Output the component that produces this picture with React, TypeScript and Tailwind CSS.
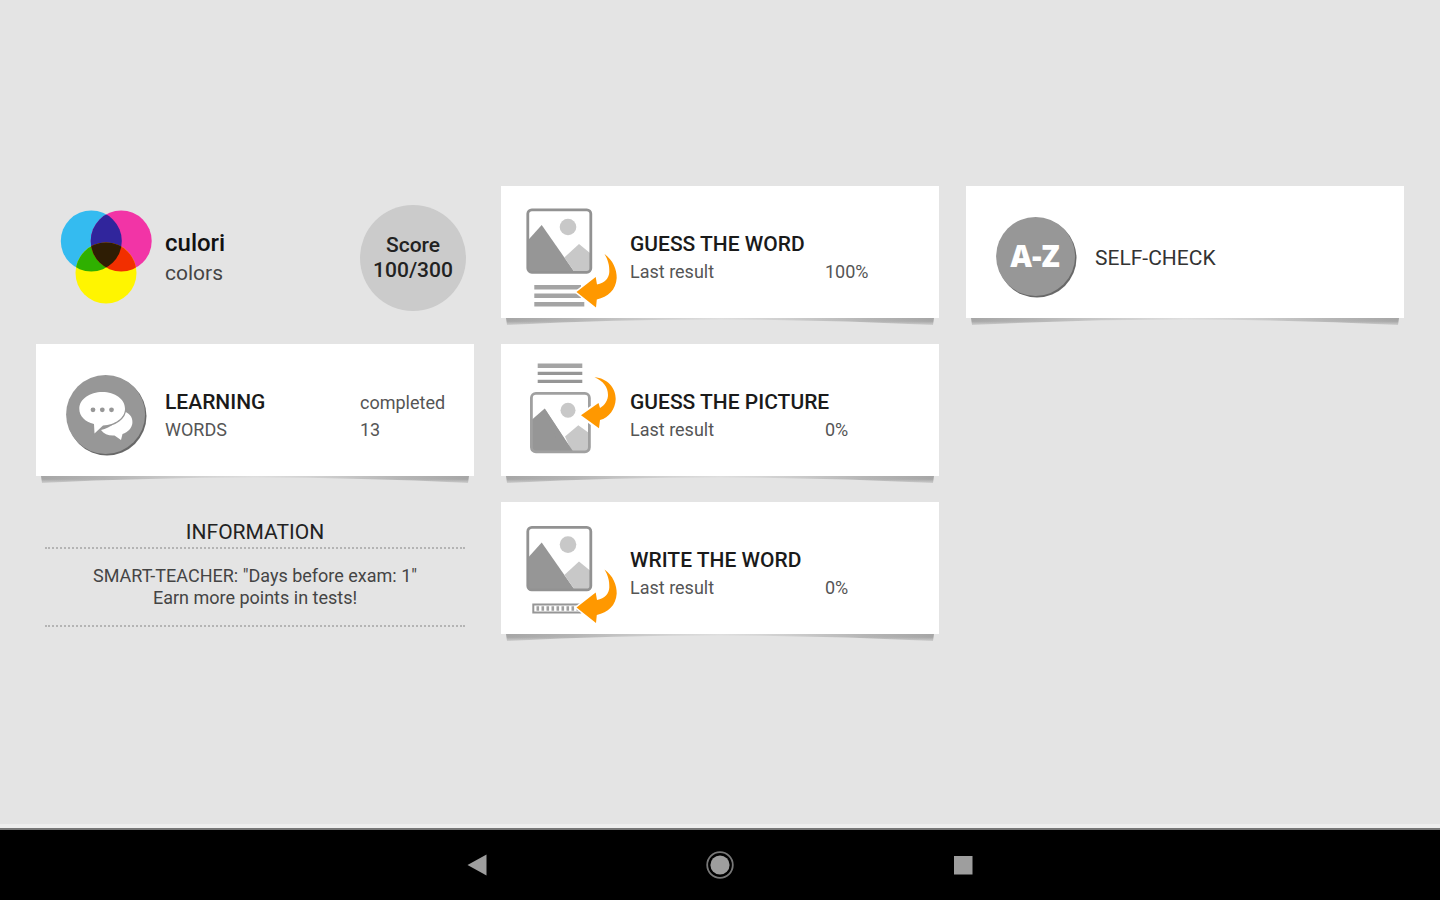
import type { ReactNode } from "react";

interface CardProps {
  icon: ReactNode;
  title: string;
  subtitle?: string;
  label?: string;
  value?: string;
}

function CardShadow() {
  return (
    <svg
      className="absolute left-1 right-1 top-full h-2 w-[calc(100%-8px)]"
      viewBox="0 0 430 8"
      preserveAspectRatio="none"
      aria-hidden="true"
    >
      <defs>
        <linearGradient id="shade" x1="0" x2="1" y1="0" y2="0">
          <stop offset="0" stopColor="#a6a6a6" />
          <stop offset="0.15" stopColor="#b4b4b4" />
          <stop offset="0.35" stopColor="#cfcfcf" />
          <stop offset="0.5" stopColor="#dedede" />
          <stop offset="0.65" stopColor="#cfcfcf" />
          <stop offset="0.85" stopColor="#b4b4b4" />
          <stop offset="1" stopColor="#a6a6a6" />
        </linearGradient>
        <linearGradient id="fade" x1="0" x2="0" y1="0" y2="1">
          <stop offset="0.4" stopColor="#e4e4e4" stopOpacity="0" />
          <stop offset="1" stopColor="#e4e4e4" stopOpacity="0.8" />
        </linearGradient>
      </defs>
      <path d="M1 0H429L428 7Q215 -4 2 7Z" fill="url(#shade)" />
      <path d="M0 0H430V8H0Z" fill="url(#fade)" />
    </svg>
  );
}

function Icon({ children }: { children: ReactNode }) {
  return (
    <svg className="h-[108px] w-[100px] shrink-0" viewBox="0 0 100 108" aria-hidden="true">
      {children}
    </svg>
  );
}

function Disc() {
  return (
    <>
      <circle cx="51" cy="54" r="39.5" fill="#686868" />
      <circle cx="49.6" cy="52.4" r="39.5" fill="#979797" />
    </>
  );
}

function Picture() {
  return (
    <>
      <path d="M7.2 36L20.7 21L53.5 68H7.2Z" fill="#969696" />
      <path d="M43.3 53.5L58 40L69 49V68H53.5Z" fill="#c8c8c8" />
      <circle cx="47" cy="23" r="8.3" fill="#c8c8c8" />
      <rect x="6.8" y="5.8" width="63" height="62.5" rx="4" fill="none" stroke="#929292" strokeWidth="2.8" />
    </>
  );
}

function Arrow() {
  return (
    <path
      d="M83.5 50C92 56 96 66 95.7 74C95 86 87 93 75.8 95.5L75 103.5L55.5 88L74.7 73L76 80.5C84 79 88 74 88.3 68C88.5 61 87 56 83.5 50Z"
      fill="#ff9800"
      stroke="#fff"
      strokeWidth="3"
      paintOrder="stroke"
    />
  );
}

function ColorsIcon() {
  return (
    <Icon>
      <defs>
        <clipPath id="cyan">
          <circle cx="35.3" cy="37" r="30.5" />
        </clipPath>
        <clipPath id="magenta">
          <circle cx="65.2" cy="37" r="30.5" />
        </clipPath>
      </defs>
      <circle cx="35.3" cy="37" r="30.5" fill="#34bbf0" />
      <circle cx="65.2" cy="37" r="30.5" fill="#f234a6" />
      <circle cx="50" cy="69" r="30.5" fill="#fff500" />
      <circle cx="65.2" cy="37" r="30.5" fill="#30259c" clipPath="url(#cyan)" />
      <circle cx="50" cy="69" r="30.5" fill="#2fb000" clipPath="url(#cyan)" />
      <g clipPath="url(#magenta)">
        <circle cx="50" cy="69" r="30.5" fill="#f22f00" />
        <circle cx="50" cy="69" r="30.5" fill="#2e1d04" clipPath="url(#cyan)" />
      </g>
    </Icon>
  );
}

function ChatIcon() {
  return (
    <Icon>
      <Disc />
      <path
        d="M66 49C73 50 77 55 76.4 61C76 66 72 70 66.5 72L65 78L58.5 73.5C53 74 48 72 45 68C55 66 63 59 66 49Z"
        fill="#fff"
      />
      <path
        d="M46.3 30C59 30 69 37 69 46.8C69 56 59 63 47 63.5L38.5 71.5L38 62C29 60 23.3 54 23.3 46.8C23.3 37 34 30 46.3 30Z"
        fill="#fff"
        stroke="#979797"
        strokeWidth="2.6"
        paintOrder="stroke"
      />
      <circle cx="37" cy="47.8" r="2.4" fill="#979797" />
      <circle cx="46.3" cy="47.8" r="2.4" fill="#979797" />
      <circle cx="55.5" cy="47.8" r="2.4" fill="#979797" />
    </Icon>
  );
}

function GuessWordIcon() {
  return (
    <Icon>
      <Picture />
      <path d="M13.3 83.3H60M13.3 91.7H60M13.3 100.3H63.3" stroke="#a4a4a4" strokeWidth="4.4" />
      <Arrow />
    </Icon>
  );
}

function GuessPictureIcon() {
  return (
    <Icon>
      <path d="M16.7 3.8H61.3" stroke="#a4a4a4" strokeWidth="4.4" />
      <path d="M16.7 11.3H61.3M16.7 19.4H61.3" stroke="#969696" strokeWidth="3.2" />
      <path d="M10.5 58L23.7 46.5L51.3 89H10.5Z" fill="#969696" />
      <path d="M44 74.5L57.3 63.3L68 71V89H50.5Z" fill="#c8c8c8" />
      <path d="M23.7 46.5L51.8 89H40Z" fill="#969696" />
      <circle cx="47" cy="48.2" r="7.5" fill="#c8c8c8" />
      <rect x="10.4" y="31.4" width="58" height="58.4" rx="4.5" fill="none" stroke="#a0a0a0" strokeWidth="2.8" />
      <path
        d="M73.5 15.3C86 16 95 26 94.7 37C94.4 47 88 56 79 58L78 66.3L60 53.3L77.5 41L79 46C84 43 87 38 87 33C87 25 82 19 73.5 15.3Z"
        fill="#ff9800"
        stroke="#fff"
        strokeWidth="4"
        paintOrder="stroke"
      />
    </Icon>
  );
}

function WriteWordIcon() {
  return (
    <Icon>
      <g transform="translate(0 1.6)">
        <Picture />
      </g>
      <rect x="12.3" y="84.5" width="47" height="8" fill="#fff" stroke="#969696" strokeWidth="2" />
      <path d="M15.5 88.5H58" stroke="#a0a0a0" strokeWidth="4.6" strokeDasharray="2.6 2.4" />
      <g transform="translate(0 -0.6)">
        <Arrow />
      </g>
    </Icon>
  );
}

function SelfCheckIcon() {
  return (
    <Icon>
      <Disc />
      <text
        x="49"
        y="62.5"
        textAnchor="middle"
        fill="#fff"
        className="font-['Open_Sans',sans-serif] text-[30px] font-extrabold"
      >
        A-Z
      </text>
    </Icon>
  );
}

function Card({ icon, title, subtitle, label, value }: CardProps) {
  return (
    <button className="relative flex h-[132px] w-full items-center bg-white pl-5 pt-3 text-left">
      <CardShadow />
      {icon}
      <span className="ml-[9px] flex flex-1 text-[18px] leading-[27px] text-[#555]">
        <span className="flex w-[195px] flex-col whitespace-nowrap text-[#555]">
          <span className={subtitle ? "text-[21px] font-medium text-[#1a1a1a]" : "text-[21px] text-[#333]"}>
            {title}
          </span>
          {subtitle && <span>{subtitle}</span>}
        </span>
        {value && (
          <span className="flex flex-col justify-end">
            {label && <span>{label}</span>}
            <span>{value}</span>
          </span>
        )}
      </span>
    </button>
  );
}

function TopicHeader() {
  return (
    <header className="flex h-[132px] items-center pl-5 pr-2 pt-3">
      <ColorsIcon />
      <div className="ml-[9px] flex-1">
        <h1 className="text-[24px] font-medium leading-[30px] text-[#111]">culori</h1>
        <p className="text-[21px] leading-[30px] text-[#444]">colors</p>
      </div>
      <div className="flex size-[106px] flex-col items-center justify-center rounded-full bg-[#cbcbcb] text-[21px] font-medium leading-[25px] text-[#222]">
        <span>Score</span>
        <span>100/300</span>
      </div>
    </header>
  );
}

function Information() {
  return (
    <section className="px-[9px] pt-4 text-center">
      <h2 className="border-b-2 border-dotted border-[#b4b4b4] pb-px text-[21px] leading-7 text-[#222]">
        INFORMATION
      </h2>
      <p className="border-b-2 border-dotted border-[#b4b4b4] pb-4 pt-4 text-[18px] leading-[22px] text-[#444]">
        SMART-TEACHER: "Days before exam: 1"
        <br />
        Earn more points in tests!
      </p>
    </section>
  );
}

function NavBar() {
  return (
    <nav className="flex h-[72px] items-center justify-center border-t-2 border-[#777] bg-black">
      <button aria-label="Back" className="flex h-12 w-[243px] items-center justify-center">
        <svg className="size-7" viewBox="0 0 28 28" fill="#9e9e9e">
          <path d="M4.5 14L23.5 3.5V24.5Z" />
        </svg>
      </button>
      <button aria-label="Home" className="flex h-12 w-[243px] items-center justify-center">
        <svg className="size-7" viewBox="0 0 28 28">
          <circle cx="14" cy="14" r="12.8" fill="none" stroke="#777" strokeWidth="1.8" />
          <circle cx="14" cy="14" r="9.6" fill="#9e9e9e" />
        </svg>
      </button>
      <button aria-label="Recent apps" className="flex h-12 w-[243px] items-center justify-center">
        <svg className="size-7" viewBox="0 0 28 28" fill="#9e9e9e">
          <rect x="5" y="5" width="18.5" height="18.5" />
        </svg>
      </button>
    </nav>
  );
}

export default function App() {
  return (
    <div className="flex min-h-screen flex-col bg-[#e4e4e4] font-[Roboto,sans-serif]">
      <main className="flex flex-1 flex-col justify-center border-b-4 border-[#eee] px-9 pb-1">
        <div className="grid grid-cols-3 items-start gap-x-[27px]">
          <div className="flex flex-col gap-[26px]">
            <TopicHeader />
            <Card icon={<ChatIcon />} title="LEARNING" subtitle="WORDS" label="completed" value="13" />
            <Information />
          </div>
          <div className="flex flex-col gap-[26px]">
            <Card icon={<GuessWordIcon />} title="GUESS THE WORD" subtitle="Last result" value="100%" />
            <Card icon={<GuessPictureIcon />} title="GUESS THE PICTURE" subtitle="Last result" value="0%" />
            <Card icon={<WriteWordIcon />} title="WRITE THE WORD" subtitle="Last result" value="0%" />
          </div>
          <Card icon={<SelfCheckIcon />} title="SELF-CHECK" />
        </div>
      </main>
      <NavBar />
    </div>
  );
}
